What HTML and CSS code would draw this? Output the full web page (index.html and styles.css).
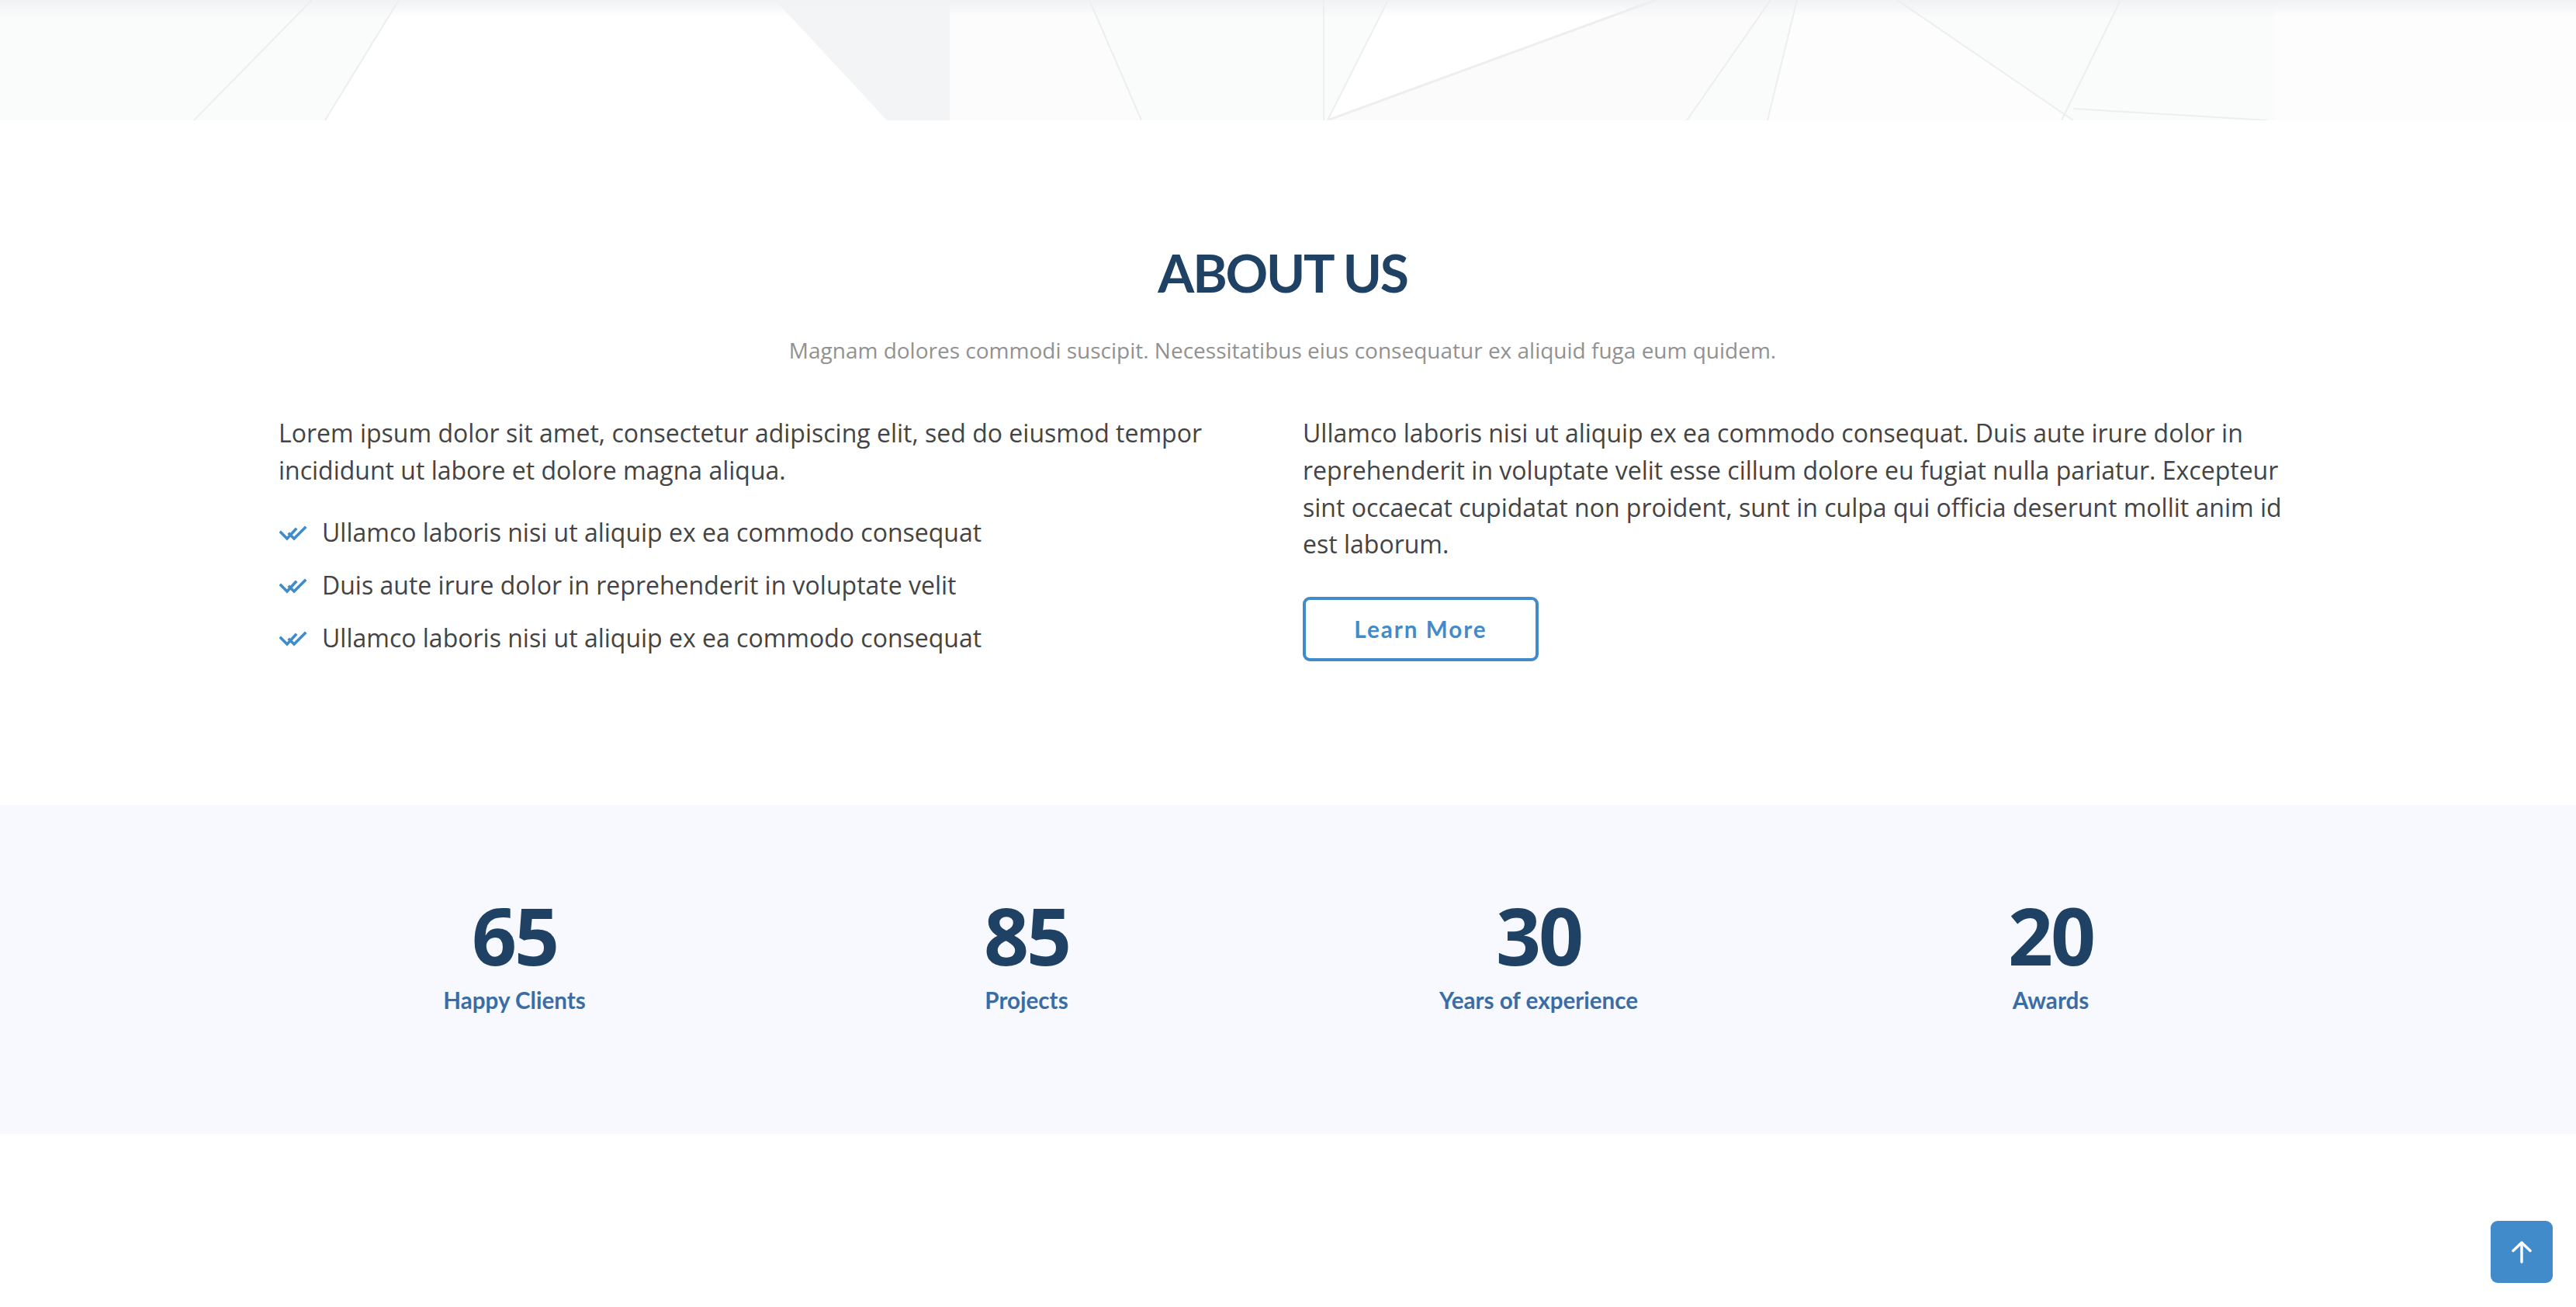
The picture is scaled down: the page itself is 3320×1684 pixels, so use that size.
FILE: index.html
```html
<!DOCTYPE html>
<html lang="en">
<head>
<meta charset="utf-8">
<title>About Us</title>
<link rel="stylesheet" href="styles.css">
</head>
<body>
<header class="hero">
  <svg class="hero-art" viewBox="0 0 3320 155" preserveAspectRatio="none" aria-hidden="true">
    <rect x="0" y="0" width="3320" height="155" fill="#fafbfb"/>
    <polygon points="419,155 514,0 999,0 1143,155" fill="#ffffff"/>
    <polygon points="999,0 1224,0 1224,155 1143,155" fill="#f3f4f5"/>
    <polygon points="1224,0 1404,0 1471,155 1224,155" fill="#fcfcfc"/>
    <polygon points="1789,0 2134,0 1711,155" fill="#ffffff"/>
    <polygon points="1711,155 2134,0 2282,0 2174,155" fill="#fbfbfc"/>
    <polygon points="2316,0 2445,0 2672,155 2278,155" fill="#fdfdfd"/>
    <polygon points="2932,0 3320,0 3320,155 2932,155" fill="#fdfdfd"/>
    <rect x="0" y="0" width="3320" height="22" fill="url(#topfade)"/>
    <defs>
      <linearGradient id="topfade" x1="0" y1="0" x2="0" y2="1">
        <stop offset="0" stop-color="#f1f2f4"/>
        <stop offset="1" stop-color="#f1f2f4" stop-opacity="0"/>
      </linearGradient>
    </defs>
    <g stroke="#eceef0" stroke-width="2" fill="none">
      <line x1="402" y1="0" x2="250" y2="155"/>
      <line x1="514" y1="0" x2="419" y2="155"/>
      <line x1="1404" y1="0" x2="1471" y2="155"/>
      <line x1="1706" y1="0" x2="1706" y2="155"/>
      <line x1="1789" y1="0" x2="1711" y2="155"/>
      <line x1="2134" y1="0" x2="1711" y2="155" stroke-width="3"/>
      <line x1="2282" y1="0" x2="2174" y2="155"/>
      <line x1="2316" y1="0" x2="2278" y2="155"/>
      <line x1="2445" y1="0" x2="2672" y2="155"/>
      <line x1="2733" y1="0" x2="2657" y2="155"/>
      <line x1="2672" y1="140" x2="2922" y2="155"/>
    </g>
  </svg>
</header>

<main>
  <section class="about">
    <div class="container">
      <div class="section-title">
        <h2>About Us</h2>
        <p>Magnam dolores commodi suscipit. Necessitatibus eius consequatur ex aliquid fuga eum quidem.</p>
      </div>
      <div class="row">
        <div class="col">
          <p class="text">Lorem ipsum dolor sit amet, consectetur adipiscing elit, sed do eiusmod tempor incididunt ut labore et dolore magna aliqua.</p>
          <ul class="checks">
            <li>
              <svg class="check" viewBox="0 0 36 20" aria-hidden="true"><path d="M2 9 L10 17 M10 17 L21 5 M13 11 L19 17 L33 3" fill="none" stroke="#428bca" stroke-width="3.6" stroke-linecap="square"/></svg>
              Ullamco laboris nisi ut aliquip ex ea commodo consequat
            </li>
            <li>
              <svg class="check" viewBox="0 0 36 20" aria-hidden="true"><path d="M2 9 L10 17 M10 17 L21 5 M13 11 L19 17 L33 3" fill="none" stroke="#428bca" stroke-width="3.6" stroke-linecap="square"/></svg>
              Duis aute irure dolor in reprehenderit in voluptate velit
            </li>
            <li>
              <svg class="check" viewBox="0 0 36 20" aria-hidden="true"><path d="M2 9 L10 17 M10 17 L21 5 M13 11 L19 17 L33 3" fill="none" stroke="#428bca" stroke-width="3.6" stroke-linecap="square"/></svg>
              Ullamco laboris nisi ut aliquip ex ea commodo consequat
            </li>
          </ul>
        </div>
        <div class="col">
          <p class="text">Ullamco laboris nisi ut aliquip ex ea commodo consequat. Duis aute irure dolor in reprehenderit in voluptate velit esse cillum dolore eu fugiat nulla pariatur. Excepteur sint occaecat cupidatat non proident, sunt in culpa qui officia deserunt mollit anim id est laborum.</p>
          <div class="actions"><a href="#" class="btn-learn-more">Learn More</a></div>
        </div>
      </div>
    </div>
  </section>

  <section class="counts">
    <div class="container">
      <div class="counts-row">
        <div class="count-box"><span class="num">65</span><p class="label">Happy Clients</p></div>
        <div class="count-box"><span class="num">85</span><p class="label">Projects</p></div>
        <div class="count-box"><span class="num">30</span><p class="label">Years of experience</p></div>
        <div class="count-box"><span class="num">20</span><p class="label">Awards</p></div>
      </div>
    </div>
  </section>
</main>

<a href="#" class="back-to-top" aria-label="Back to top">
  <svg viewBox="0 0 26 30" aria-hidden="true"><path d="M13 28 V3 M2 13.5 L13 3 L24 13.5" fill="none" stroke="#fff" stroke-width="3.4" stroke-linecap="round" stroke-linejoin="round"/></svg>
</a>
</body>
</html>
```

FILE: styles.css
```css
html, body {
  margin: 0;
  padding: 0;
  background: #ffffff;
}

body {
  font-family: "Open Sans", "Liberation Sans", sans-serif;
  color: #444444;
  min-height: 1684px;
}

.hero {
  height: 155px;
  overflow: hidden;
}

.hero-art {
  display: block;
  width: 100%;
  height: 155px;
}

.container {
  box-sizing: content-box;
  width: 2640px;
  margin: 0 auto;
  padding-right: 14px;
}

.about {
  padding: 155px 0 185px;
}

.section-title {
  text-align: center;
  padding-bottom: 61px;
}

.section-title h2 {
  margin: 0;
  font-family: "Lato", "Liberation Sans", sans-serif;
  font-weight: 700;
  font-size: 67.7px;
  line-height: 81px;
  letter-spacing: -2.2px;
  text-transform: uppercase;
  color: #1f4163;
}

.section-title p {
  margin: 38px 0 0;
  font-size: 28px;
  line-height: 44.4px;
  color: #919191;
}

.row {
  display: grid;
  grid-template-columns: 1fr 1fr;
}

.col {
  padding: 0 26px;
}

.text {
  margin: 0 0 32px;
  font-size: 32px;
  line-height: 47.6px;
}

.checks {
  list-style: none;
  margin: 0;
  padding: 0;
  display: flex;
  flex-direction: column;
  gap: 20.5px;
}

.checks li {
  position: relative;
  padding-left: 56px;
  font-size: 32px;
  line-height: 47.6px;
}

.check {
  position: absolute;
  left: 1px;
  top: 15px;
  width: 36px;
  height: 20px;
}

.actions {
  display: flex;
  margin-top: 44px;
}

.btn-learn-more {
  display: inline-block;
  box-sizing: border-box;
  width: 304px;
  height: 83px;
  border: 4px solid #428bca;
  border-radius: 9px;
  font-family: "Lato", "Liberation Sans", sans-serif;
  font-weight: 700;
  font-size: 29.6px;
  line-height: 75px;
  letter-spacing: 2px;
  text-align: center;
  color: #428bca;
  text-decoration: none;
}

.counts {
  background: #f8f9fe;
  padding: 117px 0 150px;
}

.counts-row {
  display: grid;
  grid-template-columns: repeat(4, 1fr);
  text-align: center;
}

.num {
  display: block;
  font-family: "Open Sans", "Liberation Sans", sans-serif;
  font-weight: 700;
  font-size: 101.6px;
  line-height: 101.6px;
  letter-spacing: -3px;
  color: #1f4163;
}

.label {
  margin: 11.5px 0 0;
  font-family: "Lato", "Liberation Sans", sans-serif;
  font-weight: 700;
  font-size: 29.6px;
  line-height: 44.4px;
  color: #3a6da6;
}

.back-to-top {
  position: fixed;
  right: 30px;
  bottom: 31px;
  width: 80px;
  height: 80px;
  border-radius: 9px;
  background: #428bca;
  display: flex;
  align-items: center;
  justify-content: center;
}

.back-to-top svg {
  width: 26px;
  height: 30px;
}
```
